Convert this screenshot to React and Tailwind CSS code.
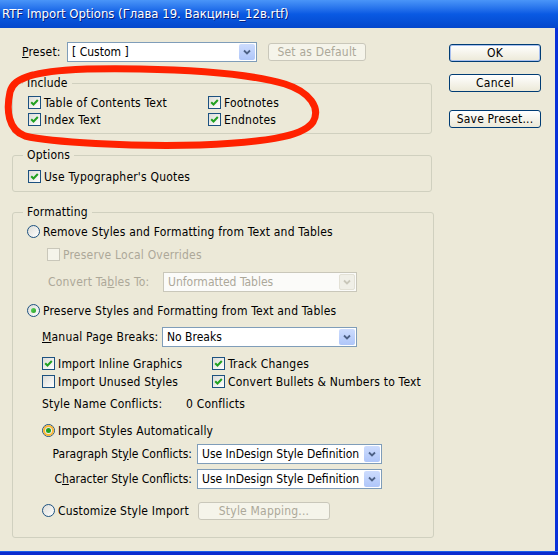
import React from "react";

const FONT = "font-['DejaVu_Sans_Condensed','DejaVu_Sans',sans-serif]";

function Check({ on, disabled }) {
  return (
    <span
      className={`w-[13px] h-[13px] border flex items-center justify-center shrink-0 ${
        disabled
          ? "border-[#c9c7ba] bg-[#f5f4ea]"
          : "border-[#1c5180] bg-gradient-to-br from-[#dcdcd7] to-white"
      }`}
    >
      {on && (
        <svg width="9" height="9" viewBox="0 0 9 9">
          <path d="M1.2 4.2 L3.5 6.5 L7.8 2" stroke="#21a121" strokeWidth="2" fill="none" />
        </svg>
      )}
    </span>
  );
}

function Radio({ on, hover }) {
  return (
    <span className="w-[13px] h-[13px] rounded-full border border-[#1c5180] bg-gradient-to-br from-[#dcdcd7] to-white flex items-center justify-center shrink-0">
      {hover && (
        <span className="w-[11px] h-[11px] rounded-full border-2 border-[#f8b636] flex items-center justify-center">
          {on && <span className="w-[5px] h-[5px] rounded-full bg-[#21a121]" />}
        </span>
      )}
      {!hover && on && <span className="w-[5px] h-[5px] rounded-full bg-gradient-to-br from-[#5fd55f] to-[#21a121]" />}
    </span>
  );
}

function Select({ value, w, disabled }) {
  return (
    <div
      className={`h-[20px] ${w} border flex items-center p-[1px] tracking-normal ${
        disabled ? "border-[#c9c7ba] bg-[#fbfbf9] text-[#aca899]" : "border-[#7f9db9] bg-white"
      }`}
    >
      <span className="flex-1 pl-[3px] whitespace-nowrap overflow-hidden">{value}</span>
      <span
        className={`w-[16px] h-full rounded-[2px] flex items-center justify-center ${
          disabled ? "bg-[#f0efe7] border border-[#e3e1d6]" : "bg-gradient-to-b from-[#cddcfd] to-[#afc6f9]"
        }`}
      >
        <svg width="8" height="6" viewBox="0 0 8 6">
          <path d="M1 1.5 L4 4.5 L7 1.5" stroke={disabled ? "#c9c7ba" : "#4d6185"} strokeWidth="1.8" fill="none" />
        </svg>
      </span>
    </div>
  );
}

function Btn({ children, w, disabled, isDefault }) {
  return (
    <div
      className={`h-[18px] ${w} rounded-[3px] border flex items-center justify-center whitespace-nowrap ${
        disabled
          ? "border-[#c9c7ba] text-[#aca899] bg-[#f5f4ea]"
          : "border-[#003c74] bg-gradient-to-b from-white to-[#ece9d8]"
      } ${isDefault ? "shadow-[inset_0_0_0_1px_#a8c0ef]" : ""}`}
    >
      {children}
    </div>
  );
}

function Row({ children, className = "" }) {
  return <div className={`h-[17px] flex items-center gap-[3px] ${className}`}>{children}</div>;
}

function Group({ title, h, className = "", children }) {
  return (
    <fieldset className={`w-[420px] ${h} border border-[#d0d0bf] rounded-[3px] ${className}`}>
      <legend className="ml-[10px] px-[4px] leading-[14px]">{title}</legend>
      {children}
    </fieldset>
  );
}

export default function App() {
  return (
    <div className={`relative w-[558px] h-[555px] bg-[#ece9d8] overflow-hidden flex flex-col text-[12px] tracking-[0.2px] text-black ${FONT}`}>
      {/* title bar */}
      <div className="h-[28px] shrink-0 bg-gradient-to-b from-[#4a95f8] via-[#0a5ae3] to-[#0447cc] flex items-center pl-[2px]">
        <span className="text-white text-[13px] tracking-normal [text-shadow:1px_1px_0_#0a1e7a]">
          RTF Import Options (Глава 19. Вакцины_12в.rtf)
        </span>
      </div>

      <div className="flex flex-1">
        {/* left */}
        <div className="w-[449px] pl-[12px] flex flex-col">
          <div className="mt-[14px] h-[20px] flex items-center">
            <span className="ml-[10px] w-[45px]">
              <span className="underline">P</span>reset:
            </span>
            <Select value="[ Custom ]" w="w-[190px]" />
            <div className="ml-[11px]">
              <Btn w="w-[98px]" disabled>
                Set as Default
              </Btn>
            </div>
          </div>

          <Group title="Include" h="h-[58px]" className="mt-[14px]">
            <div className="pt-[4px] pl-[15px]">
              <div className="flex">
                <Row className="w-[180px]">
                  <Check on />
                  <span>Table of Contents Text</span>
                </Row>
                <Row>
                  <Check on />
                  <span>Footnotes</span>
                </Row>
              </div>
              <div className="flex">
                <Row className="w-[180px]">
                  <Check on />
                  <span>Index Text</span>
                </Row>
                <Row>
                  <Check on />
                  <span>Endnotes</span>
                </Row>
              </div>
            </div>
          </Group>

          <Group title="Options" h="h-[44px]" className="mt-[14px]">
            <div className="pt-[6px] pl-[15px]">
              <Row>
                <Check on />
                <span>Use Typographer's Quotes</span>
              </Row>
            </div>
          </Group>

          <Group title="Formatting" h="h-[333px]" className="mt-[13px]">
            <div className="pl-[14px]">
              <Row className="mt-[4px]">
                <Radio />
                <span>Remove Styles and Formatting from Text and Tables</span>
              </Row>
              <Row className="mt-[6px] ml-[20px] text-[#aca899]">
                <Check disabled />
                <span>Preserve Local Overrides</span>
              </Row>
              <div className="mt-[9px] ml-[21px] h-[20px] flex items-center text-[#aca899]">
                <span className="w-[115px]">
                  Convert Ta<span className="underline">b</span>les To:
                </span>
                <Select value="Unformatted Tables" w="w-[194px]" disabled />
              </div>
              <Row className="mt-[10px]">
                <Radio on />
                <span>Preserve Styles and Formatting from Text and Tables</span>
              </Row>
              <div className="mt-[8px] ml-[15px] h-[20px] flex items-center">
                <span className="w-[120px]">
                  <span className="underline">M</span>anual Page Breaks:
                </span>
                <Select value="No Breaks" w="w-[195px]" />
              </div>
              <div className="mt-[8px] ml-[15px] flex">
                <Row className="w-[170px]">
                  <Check on />
                  <span>Import Inline Graphics</span>
                </Row>
                <Row>
                  <Check on />
                  <span>Track Changes</span>
                </Row>
              </div>
              <div className="mt-[1px] ml-[15px] flex">
                <Row className="w-[170px]">
                  <Check />
                  <span>Import Unused Styles</span>
                </Row>
                <Row>
                  <Check on />
                  <span className="w-[205px] bg-[#ece9d8] whitespace-nowrap">Convert Bullets &amp; Numbers to Text</span>
                </Row>
              </div>
              <Row className="mt-[5px] ml-[15px]">
                <span className="w-[141px]">Style Name Conflicts:</span>
                <span>0 Conflicts</span>
              </Row>
              <Row className="mt-[10px] ml-[15px]">
                <Radio on hover />
                <span>Import Styles Automatically</span>
              </Row>
              <div className="mt-[5px] ml-[15px] h-[20px] flex items-center">
                <span className="w-[155px] pr-[5px] text-right whitespace-nowrap tracking-normal">
                  Paragraph St<span className="underline">y</span>le Conflicts:
                </span>
                <Select value="Use InDesign Style Definition" w="w-[185px]" />
              </div>
              <div className="mt-[5px] ml-[15px] h-[20px] flex items-center">
                <span className="w-[155px] pr-[5px] text-right whitespace-nowrap tracking-normal">
                  C<span className="underline">h</span>aracter Style Conflicts:
                </span>
                <Select value="Use InDesign Style Definition" w="w-[185px]" />
              </div>
              <div className="mt-[13px] ml-[15px] h-[17px] flex items-center">
                <div className="w-[156px] flex items-center gap-[3px]">
                  <Radio />
                  <span>Customize Style Import</span>
                </div>
                <Btn w="w-[132px]" disabled>
                  Style Mapping...
                </Btn>
              </div>
            </div>
          </Group>
        </div>

        {/* right buttons */}
        <div className="w-[92px] pt-[16px] flex flex-col">
          <Btn w="w-[92px]" isDefault>
            OK
          </Btn>
          <div className="mt-[12px]">
            <Btn w="w-[92px]">Cancel</Btn>
          </div>
          <div className="mt-[18px]">
            <Btn w="w-[92px]">Save Preset...</Btn>
          </div>
        </div>
        <div className="flex-1" />
        <div className="w-[3px] bg-[#0831d9]" />
      </div>
      <div className="h-[4px] shrink-0 bg-[#0a2ccf] border-t border-[#1d5ee8]" />

      {/* red marker annotation */}
      <svg className="absolute left-0 top-0 pointer-events-none" width="558" height="555" viewBox="0 0 558 555">
        <path
          d="M22 79 C40 70 80 68 140 69 S250 74 285 84 C310 92 321 108 313 122 C302 138 260 142 200 145 C130 147 50 142 25 136 C8 130 6 110 10 92 C12 84 18 79 32 75"
          stroke="#ff2200"
          strokeWidth="7"
          strokeLinecap="round"
          fill="none"
        />
      </svg>
    </div>
  );
}
